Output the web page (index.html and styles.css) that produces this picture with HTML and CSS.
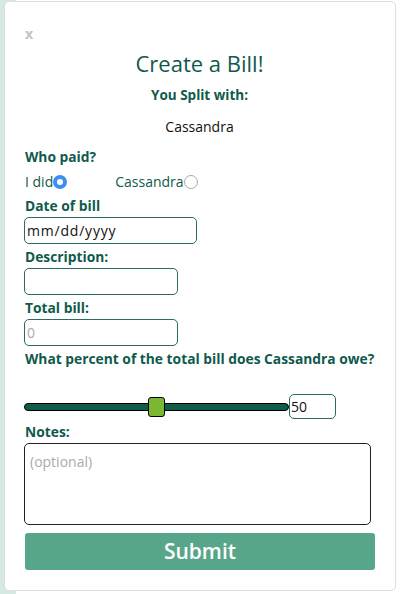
FILE: index.html
```html
<!DOCTYPE html>
<html>
<head>
<meta charset="utf-8">
<link rel="stylesheet" href="styles.css">
</head>
<body>
<div class="modal">
  <div class="close">x</div>
  <h1 class="title">Create a Bill!</h1>
  <div class="split-label">You Split with:</div>
  <div class="friend">Cassandra</div>
  <form class="form">
    <label class="label">Who paid?</label>
    <div class="radios">
      <label class="radio-opt"><span>I did</span><input class="radio" type="radio" name="payer" checked></label>
      <label class="radio-opt"><span>Cassandra</span><input class="radio" type="radio" name="payer"></label>
    </div>
    <label class="label">Date of bill</label>
    <input class="field field-date" type="text" placeholder="mm/dd/yyyy">
    <label class="label">Description:</label>
    <input class="field field-short" type="text">
    <label class="label">Total bill:</label>
    <input class="field field-short field-num" type="text" placeholder="0">
    <label class="label label-percent">What percent of the total bill does Cassandra owe?</label>
    <div class="slider-row">
      <input class="slider" type="range" min="0" max="100" value="50">
      <input class="pct" type="text" value="50">
    </div>
    <label class="label label-notes">Notes:</label>
    <textarea class="notes" placeholder="(optional)"></textarea>
    <button class="submit" type="button">Submit</button>
  </form>
</div>
</body>
</html>
```
FILE: styles.css
```css
html, body {
  margin: 0;
  padding: 0;
}
body {
  width: 404px;
  height: 594px;
  overflow: hidden;
  background: linear-gradient(to right, #d5e8e2 0, #d5e8e2 16px, #ffffff 16px);
  font-family: "Open Sans", "Noto Sans", sans-serif;
  color: #0f5a4c;
}
.modal {
  margin: 1px 0 0 4px;
  width: 392px;
  height: 590px;
  box-sizing: border-box;
  border: 1px solid #dedede;
  border-radius: 5px;
  background: #fff;
  padding: 24px 20px 0 19px;
  display: flex;
  flex-direction: column;
}
.close {
  margin-left: 1px;
  font-size: 14px;
  font-weight: 700;
  color: #c4c4c4;
  line-height: 16px;
  height: 16px;
}
.title {
  margin: 6px 0 0;
  text-align: center;
  font-size: 22px;
  font-weight: 400;
  line-height: 30px;
  color: #0f5a4c;
}
.split-label {
  margin-top: 8px;
  text-align: center;
  font-size: 13.5px;
  font-weight: 700;
  line-height: 18px;
}
.friend {
  margin-top: 14px;
  text-align: center;
  font-size: 14px;
  line-height: 18px;
  color: #111;
}
.form {
  margin-top: 11px;
  display: flex;
  flex-direction: column;
  align-items: flex-start;
}
.label {
  display: block;
  margin-left: 1px;
  font-size: 13.8px;
  font-weight: 700;
  line-height: 20px;
  color: #0f5a4c;
}
.radios {
  display: flex;
  gap: 48px;
  height: 29px;
  align-items: center;
  margin-left: 1px;
}
.radio-opt {
  display: flex;
  align-items: center;
  font-size: 14px;
  color: #0f5a4c;
}
.radio {
  -webkit-appearance: none;
  appearance: none;
  box-sizing: border-box;
  margin: 0;
  width: 14px;
  height: 14px;
  border-radius: 50%;
  border: 1px solid #a9a9a9;
  background: #fff;
}
.radio:checked {
  border: 4.5px solid #3d8ef0;
}
.field {
  box-sizing: border-box;
  height: 27px;
  border: 1px solid #2b6c5f;
  border-radius: 5px;
  padding: 0 2px;
  font-family: inherit;
  font-size: 14px;
  color: #111;
  outline: none;
  margin: 1px 0 3px;
}
.field-date {
  width: 173px;
  letter-spacing: 0.8px;
}
.field-date::placeholder {
  color: #111;
}
.field-short {
  width: 154px;
}
.field-num::placeholder {
  color: #aaa;
}
.slider-row {
  margin-top: 25px;
  height: 25px;
  display: flex;
  align-items: center;
}
.slider {
  -webkit-appearance: none;
  appearance: none;
  width: 265px;
  height: 22px;
  margin: 0;
  background: transparent;
}
.slider::-webkit-slider-runnable-track {
  height: 8px;
  background: #0f5c4a;
  border: 1px solid #000;
  border-radius: 5px;
}
.slider::-webkit-slider-thumb {
  -webkit-appearance: none;
  width: 17px;
  height: 20px;
  margin-top: -7px;
  background: #7ab832;
  border: 1px solid #000;
  border-radius: 3px;
}
.pct {
  box-sizing: border-box;
  width: 47px;
  height: 25px;
  border: 1px solid #2b6c5f;
  border-radius: 5px;
  padding: 0 1px;
  font-family: inherit;
  font-size: 14px;
  color: #111;
  outline: none;
}
.label-notes {
  margin-top: 3px;
}
.notes {
  box-sizing: border-box;
  width: 347px;
  height: 82px;
  border: 1px solid #222;
  border-radius: 5px;
  padding: 8px 5px;
  font-family: inherit;
  font-size: 14px;
  resize: none;
  outline: none;
  margin-top: 1px;
}
.notes::placeholder {
  color: #aaa;
}
.submit {
  margin: 8px 0 0 1px;
  width: 350px;
  height: 37px;
  border: none;
  border-radius: 3px;
  background: #58a68a;
  color: #fff;
  font-family: inherit;
  font-size: 21px;
  font-weight: 600;
  padding: 0;
  line-height: 37px;
}
```
